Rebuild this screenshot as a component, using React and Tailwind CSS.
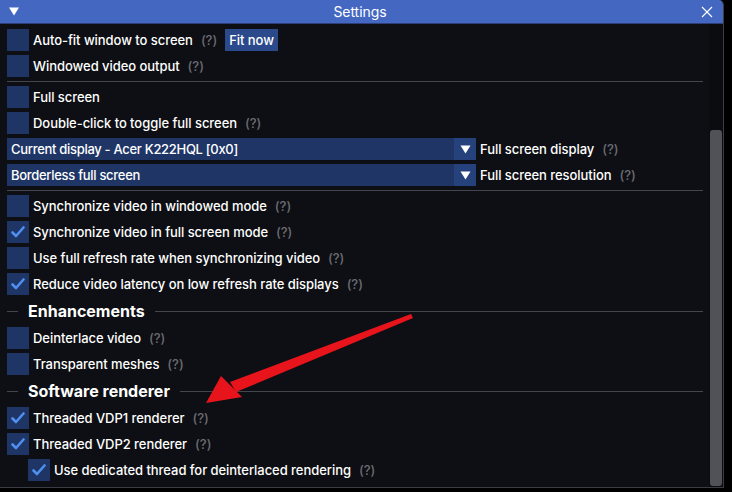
import React from "react";

function Q() {
  return <span className="ml-[8px] text-[#6b6c72]">(?)</span>;
}

function Check({ checked }) {
  return (
    <div className="w-[22px] h-[22px] bg-[#1e3566] flex items-center justify-center shrink-0">
      {checked && (
        <svg width="14" height="12" viewBox="0 0 14 12">
          <path d="M1.5 6.5 L5 10 L12.5 1.5" fill="none" stroke="#4f8ff0" strokeWidth="2.6" strokeLinecap="round" strokeLinejoin="round" />
        </svg>
      )}
    </div>
  );
}

function Row({ label, checked, help = true, indent = false, children }) {
  return (
    <div className={`h-[22px] flex items-center ${indent ? "pl-[21px]" : ""}`}>
      <Check checked={checked} />
      <span className="ml-[4px] text-white whitespace-nowrap">{label}</span>
      {help && <Q />}
      {children}
    </div>
  );
}

function Sep() {
  return <div className="h-[1px] bg-[#45464c]" />;
}

function Header({ label }) {
  return (
    <div className="h-[24px] flex items-center">
      <div className="w-[11px] h-[1px] bg-[#45464c]" />
      <span className="ml-[10px] mr-[10px] text-white font-bold text-[16px] tracking-normal whitespace-nowrap">{label}</span>
      <div className="flex-1 h-[1px] bg-[#45464c]" />
    </div>
  );
}

function Combo({ value, label }) {
  return (
    <div className="h-[22px] flex items-center">
      <div className="w-[469px] h-full flex bg-[#1e3566]">
        <div className="flex-1 pl-[4px] flex items-center text-white whitespace-nowrap tracking-[-0.3px]">{value}</div>
        <div className="w-[22px] h-full bg-[#26427d] flex items-center justify-center">
          <svg width="11" height="9" viewBox="0 0 11 9"><path d="M0.5 0.5 H10.5 L5.5 8.5 Z" fill="#ffffff" /></svg>
        </div>
      </div>
      <span className="ml-[4px] text-white whitespace-nowrap">{label}</span>
      <Q />
    </div>
  );
}

export default function App() {
  return (
    <div className="w-[732px] h-[492px] bg-black relative overflow-hidden font-['Inter',sans-serif] text-[13px] font-medium tracking-[-0.05px] leading-none">
      <div className="w-[724px] h-[488px] bg-[#0e0f14] border-r border-b border-[#3c3d42] rounded-tr-[5px] flex flex-col overflow-hidden">
        <div className="h-[24px] shrink-0 bg-[#4468c2] border-b border-[#2c3f78] flex items-center relative">
          <svg className="ml-[9px]" width="10" height="9" viewBox="0 0 10 9"><path d="M0 0.5 H10 L5 8.5 Z" fill="#ffffff" /></svg>
          <div className="flex-1 text-center text-white text-[14px] font-normal">Settings</div>
          <svg className="mr-[10px]" width="12" height="12" viewBox="0 0 12 12">
            <path d="M1 1 L11 11 M11 1 L1 11" stroke="#ffffff" strokeWidth="1.1" />
          </svg>
        </div>
        <div className="flex-1 flex min-h-0">
          <div className="flex-1 pl-[7px] pr-[6px] pt-[5px] flex flex-col gap-[4px]">
            <Row label="Auto-fit window to screen" checked={false}>
              <div className="ml-[8px] h-[22px] px-[4px] bg-[#2b4a8c] text-white flex items-center">Fit now</div>
            </Row>
            <Row label="Windowed video output" checked={false} />
            <Sep />
            <Row label="Full screen" checked={false} help={false} />
            <Row label="Double-click to toggle full screen" checked={false} />
            <Combo value="Current display - Acer K222HQL [0x0]" label="Full screen display" />
            <Combo value="Borderless full screen" label="Full screen resolution" />
            <Sep />
            <Row label="Synchronize video in windowed mode" checked={false} />
            <Row label="Synchronize video in full screen mode" checked={true} />
            <Row label="Use full refresh rate when synchronizing video" checked={false} />
            <Row label="Reduce video latency on low refresh rate displays" checked={true} />
            <Header label="Enhancements" />
            <Row label="Deinterlace video" checked={false} />
            <Row label="Transparent meshes" checked={false} />
            <Header label="Software renderer" />
            <Row label="Threaded VDP1 renderer" checked={true} />
            <Row label="Threaded VDP2 renderer" checked={true} />
            <Row label="Use dedicated thread for deinterlaced rendering" checked={true} indent />
          </div>
          <div className="w-[14px] bg-[#0b0c10] flex flex-col pt-[106px] pb-[1px] px-[1px]">
            <div className="flex-1 bg-[#505258] rounded-[3px]" />
          </div>
        </div>
      </div>
      <svg className="absolute left-0 top-0 pointer-events-none" width="732" height="492" viewBox="0 0 732 492">
        <polygon points="411,314 413,318 236,392 230,382" fill="#e8141b" />
        <polygon points="206,403 221,376 242,397" fill="#e8141b" />
      </svg>
    </div>
  );
}
